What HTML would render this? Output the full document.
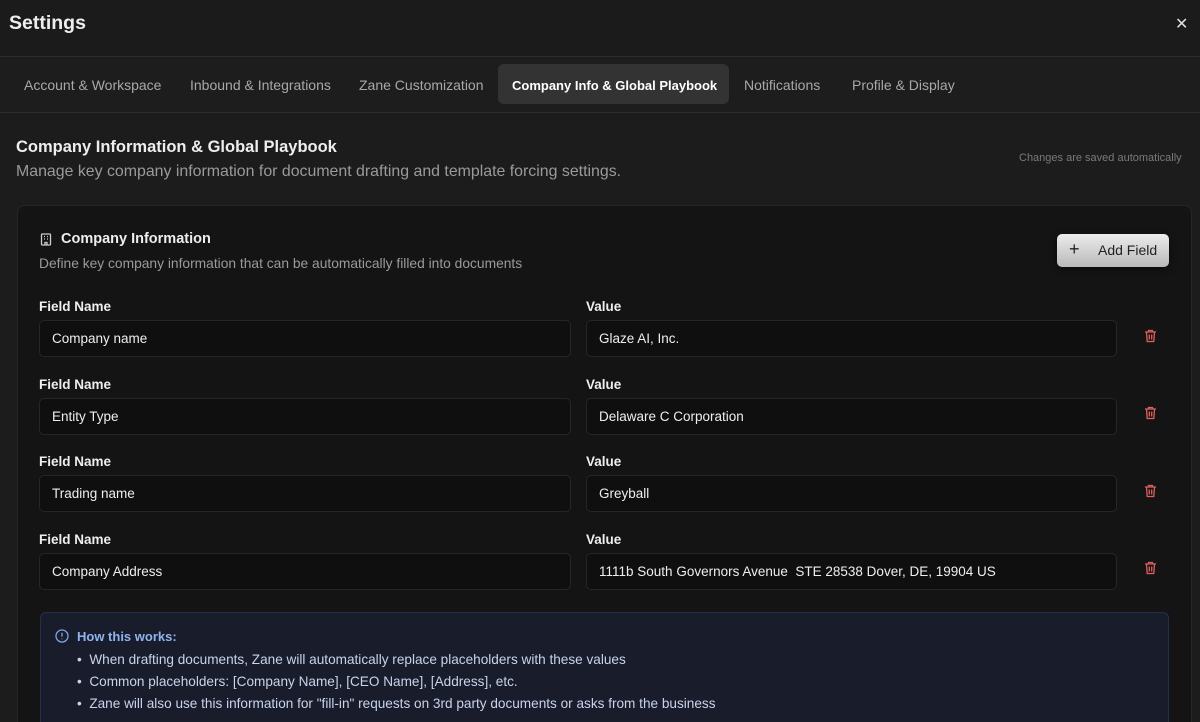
<!DOCTYPE html>
<html><head><style>
*{box-sizing:border-box;margin:0;padding:0}
html,body{width:1200px;height:722px;overflow:hidden}
body{background:#1c1c1c;font-family:"Liberation Sans",sans-serif;color:#eee;position:relative}
.a{position:absolute}
.hdr{left:0;top:0;width:1200px;height:57px;border-bottom:1px solid #2c2c2c;background:#1b1b1b}
.tabs{left:0;top:57px;width:1200px;height:56px;border-bottom:1px solid #2c2c2c;background:#1d1d1d}
.tab{position:absolute;top:20px;font-size:14px;color:#a8a8a8}
.card{left:17px;top:205px;width:1175px;height:540px;background:#141414;border:1px solid #262626;border-radius:8px}
.lbl{position:absolute;font-size:13.5px;font-weight:bold;color:#eee}
.inp{position:absolute;height:37px;background:#0f0f0f;border:1px solid #262626;border-radius:5px;font-size:13.5px;color:#eee;padding:10px 12px}
</style></head><body>
<div class="a hdr"><div class="a" style="left:9px;top:12px;font-size:19.5px;font-weight:bold">Settings</div>
<div class="a" style="left:1175px;top:14px;font-size:16px;color:#ddd">✕</div></div>
<div class="a tabs">
<div class="tab" style="left:24px">Account &amp; Workspace</div>
<div class="tab" style="left:190px">Inbound &amp; Integrations</div>
<div class="tab" style="left:359px">Zane Customization</div>
<div class="a" style="left:498px;top:7px;width:231px;height:40px;background:#333;border-radius:6px"></div>
<div class="tab" style="left:512px;color:#fff;font-weight:bold;font-size:13px;top:21px">Company Info &amp; Global Playbook</div>
<div class="tab" style="left:744px">Notifications</div>
<div class="tab" style="left:852px">Profile &amp; Display</div>
</div>
<div class="a" style="left:16px;top:138px;font-size:16.5px;font-weight:bold">Company Information &amp; Global Playbook</div>
<div class="a" style="left:16px;top:163px;font-size:15.9px;color:#9a9a9a">Manage key company information for document drafting and template forcing settings.</div>
<div class="a" style="left:1019px;top:152px;font-size:11px;color:#7a7a7a">Changes are saved automatically</div>
<div class="a card"></div>
<svg class="a" style="left:40px;top:233px" width="12" height="13" viewBox="0 0 12 13" fill="none" stroke="#ccc" stroke-width="1.3"><rect x="1.5" y="1" width="9" height="11" rx="1"/><path d="M4 3.5h1M7 3.5h1M4 6h1M7 6h1M5 12v-2.5h2V12"/></svg>
<div class="a" style="left:61px;top:231px;font-size:14.5px;font-weight:bold">Company Information</div>
<div class="a" style="left:39px;top:256px;font-size:13.8px;color:#9a9a9a">Define key company information that can be automatically filled into documents</div>
<div class="a" style="left:1057px;top:234px;width:112px;height:33px;border-radius:5px;background:linear-gradient(#ececec,#b9b9b9);color:#222;font-size:14px;box-shadow:0 2px 8px rgba(0,0,0,.5)"><span class="a" style="left:12px;top:5px;font-size:18px">+</span><span class="a" style="left:41px;top:8px">Add Field</span></div>
<div class="lbl" style="left:39px;top:299px">Field Name</div><div class="lbl" style="left:586px;top:299px">Value</div>
<div class="inp" style="left:39px;top:320px;width:532px">Company name</div><div class="inp" style="left:586px;top:320px;width:531px">Glaze AI, Inc.</div>
<div class="lbl" style="left:39px;top:377px">Field Name</div><div class="lbl" style="left:586px;top:377px">Value</div>
<div class="inp" style="left:39px;top:398px;width:532px">Entity Type</div><div class="inp" style="left:586px;top:398px;width:531px">Delaware C Corporation</div>
<div class="lbl" style="left:39px;top:454px">Field Name</div><div class="lbl" style="left:586px;top:454px">Value</div>
<div class="inp" style="left:39px;top:475px;width:532px">Trading name</div><div class="inp" style="left:586px;top:475px;width:531px">Greyball</div>
<div class="lbl" style="left:39px;top:532px">Field Name</div><div class="lbl" style="left:586px;top:532px">Value</div>
<div class="inp" style="left:39px;top:553px;width:532px">Company Address</div><div class="inp" style="left:586px;top:553px;width:531px">1111b South Governors Avenue&nbsp; STE 28538 Dover, DE, 19904 US</div>
<svg class="a" style="left:1144px;top:329px" width="13" height="14" viewBox="0 0 13 14" fill="none" stroke="#e06060" stroke-width="1.3"><path d="M1 3h11M4.5 3V1.5h4V3M2.5 3l.7 9.5h6.6L10.5 3M5.3 5.5v5M7.7 5.5v5"/></svg>
<svg class="a" style="left:1144px;top:406px" width="13" height="14" viewBox="0 0 13 14" fill="none" stroke="#e06060" stroke-width="1.3"><path d="M1 3h11M4.5 3V1.5h4V3M2.5 3l.7 9.5h6.6L10.5 3M5.3 5.5v5M7.7 5.5v5"/></svg>
<svg class="a" style="left:1144px;top:484px" width="13" height="14" viewBox="0 0 13 14" fill="none" stroke="#e06060" stroke-width="1.3"><path d="M1 3h11M4.5 3V1.5h4V3M2.5 3l.7 9.5h6.6L10.5 3M5.3 5.5v5M7.7 5.5v5"/></svg>
<svg class="a" style="left:1144px;top:561px" width="13" height="14" viewBox="0 0 13 14" fill="none" stroke="#e06060" stroke-width="1.3"><path d="M1 3h11M4.5 3V1.5h4V3M2.5 3l.7 9.5h6.6L10.5 3M5.3 5.5v5M7.7 5.5v5"/></svg>
<div class="a" style="left:40px;top:612px;width:1129px;height:130px;background:#181c2b;border:1px solid #23304a;border-radius:6px"></div>
<svg class="a" style="left:55px;top:629px" width="14" height="14" viewBox="0 0 14 14" fill="none" stroke="#7aa6e8" stroke-width="1.3"><circle cx="7" cy="7" r="6"/><path d="M7 3.8v3.8M7 9.6v.6"/></svg>
<div class="a" style="left:77px;top:629px;font-size:13px;font-weight:bold;color:#8fb4ee">How this works:</div>
<div class="a" style="left:77px;top:649px;font-size:13.6px;color:#c8d4ea;line-height:22px">
• &nbsp;When drafting documents, Zane will automatically replace placeholders with these values<br>
• &nbsp;Common placeholders: [Company Name], [CEO Name], [Address], etc.<br>
• &nbsp;Zane will also use this information for "fill-in" requests on 3rd party documents or asks from the business</div>
</body></html>
